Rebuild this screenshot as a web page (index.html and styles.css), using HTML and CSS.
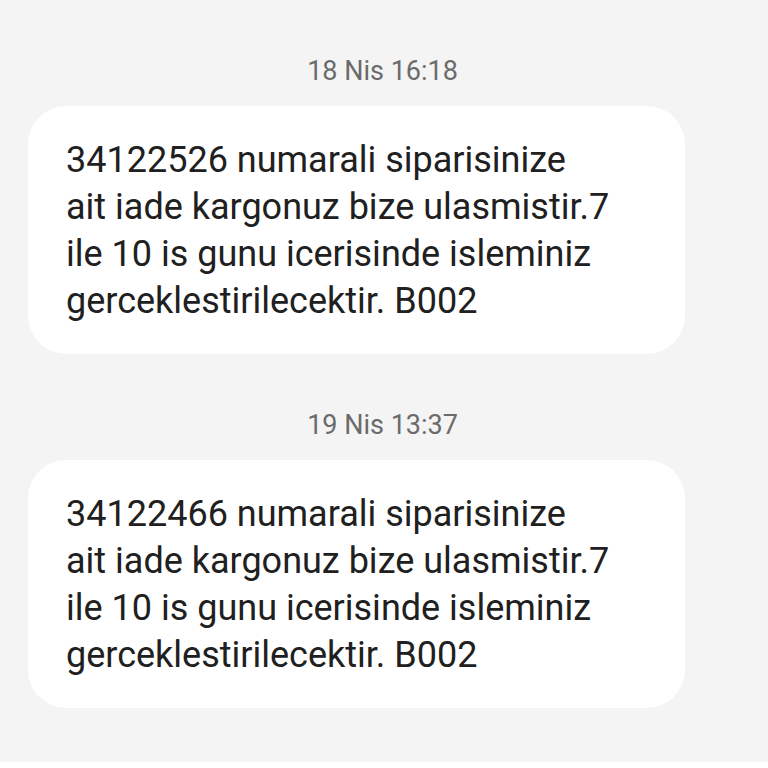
FILE: index.html
```html
<!DOCTYPE html>
<html lang="tr">
<head>
    <meta charset="UTF-8">
    <meta name="viewport" content="width=device-width, initial-scale=1.0">
    <title>Mesajlar</title>
    <link rel="stylesheet" href="styles.css">
</head>
<body>
    <div class="thread">
        <div class="stamp">18 Nis 16:18</div>
        <div class="bubble">
            <p>34122526 numarali siparisinize<br>ait iade kargonuz bize ulasmistir.7<br>ile 10 is gunu icerisinde isleminiz<br>gerceklestirilecektir. B002</p>
        </div>

        <div class="stamp">19 Nis 13:37</div>
        <div class="bubble">
            <p>34122466 numarali siparisinize<br>ait iade kargonuz bize ulasmistir.7<br>ile 10 is gunu icerisinde isleminiz<br>gerceklestirilecektir. B002</p>
        </div>
    </div>
    <div class="composer"></div>
</body>
</html>
```

FILE: styles.css
```css
/* Base */
body {
    margin: 0;
    background: #f4f4f4;
    font-family: Roboto, 'Noto Sans', sans-serif;
    overflow: hidden;
    height: 768px;
}

.thread {
    padding: 56px 83px 0 28px;
}

/* Date stamp */
.stamp {
    text-align: center;
    padding-left: 52px;
    font-size: 27px;
    line-height: 30px;
    color: #6b6b6b;
    margin-bottom: 20px;
}

/* Message bubble */
.bubble {
    background: #fff;
    border-radius: 38px;
    padding: 31px 38px 29px;
    margin-bottom: 56px;
}

.bubble p {
    margin: 0;
    font-size: 36px;
    line-height: 47px;
    color: #202020;
}

.composer {
    height: 20px;
    margin-top: -2px;
    background: #fff;
}
```
